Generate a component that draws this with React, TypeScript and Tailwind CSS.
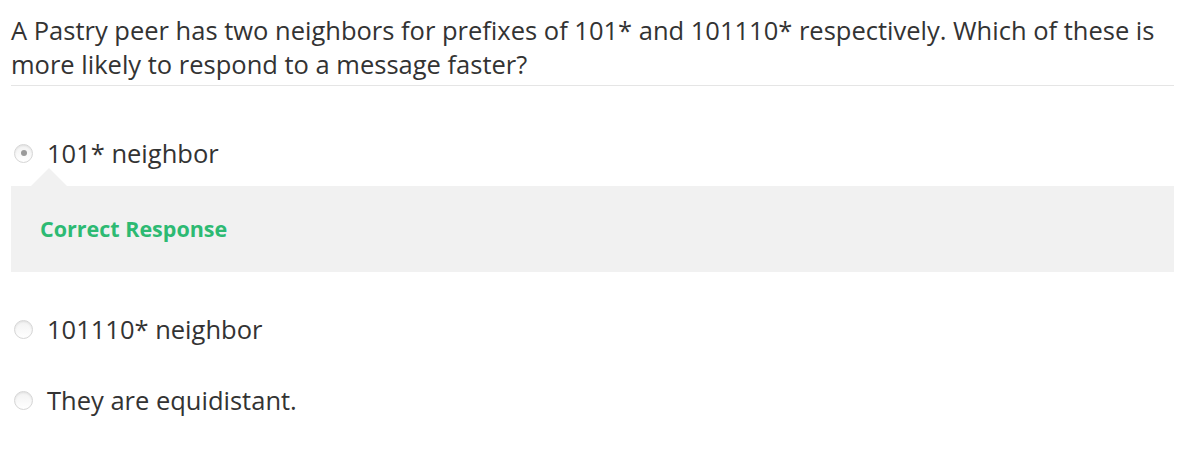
import React from "react";

function Radio({ checked }: { checked?: boolean }) {
  return (
    <span className="flex h-[19px] w-[19px] shrink-0 items-center justify-center rounded-full border border-[#d6d6d6] bg-gradient-to-b from-[#f2f2f2] to-white shadow-[inset_0_1px_2px_rgba(0,0,0,0.08)]">
      {checked && <span className="h-[6px] w-[6px] rounded-full bg-[#9a9a9a]" />}
    </span>
  );
}

function Option({ label, checked }: { label: string; checked?: boolean }) {
  return (
    <div className="flex h-[34px] items-center">
      <div className="flex w-[36px] pl-[3px]">
        <Radio checked={checked} />
      </div>
      <span className="text-[25.5px] leading-[34px] text-[#333333]">{label}</span>
    </div>
  );
}

export default function App() {
  return (
    <div
      className="h-[450px] w-[1190px] bg-white pl-[11px] pr-[16px] text-[#333333]"
      style={{ fontFamily: '"Open Sans", "Liberation Sans", sans-serif' }}
    >
      {/* question */}
      <div className="border-b border-[#e5e5e5] pt-[13px] pb-[4px] text-[25.5px] leading-[34px]">
        A Pastry peer has two neighbors for prefixes of 101* and 101110* respectively. Which of these is more likely to
        respond to a message faster?
      </div>

      {/* answers */}
      <div className="pt-[50px]">
        <Option label="101* neighbor" checked />
        {/* feedback */}
        <div className="relative mt-[16px] flex h-[86px] items-center bg-[#f1f1f1] pl-[29px]">
          <span className="absolute left-[20px] top-[-18px] h-0 w-0 border-x-[18px] border-b-[18px] border-x-transparent border-b-[#f1f1f1]" />
          <span className="text-[21.5px] font-bold text-[#2dba73]">Correct Response</span>
        </div>
        <div className="mt-[40px]">
          <Option label="101110* neighbor" />
        </div>
        <div className="mt-[37px]">
          <Option label="They are equidistant." />
        </div>
      </div>
    </div>
  );
}
